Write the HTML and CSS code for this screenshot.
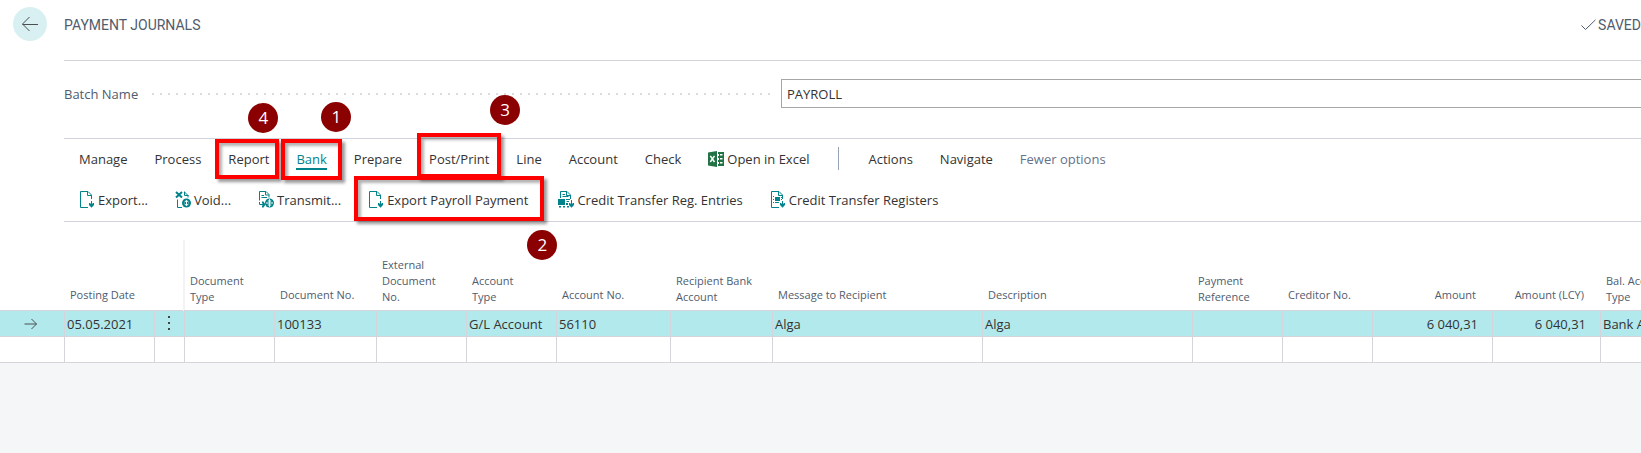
FILE: index.html
```html
<!DOCTYPE html>
<html lang="en">
<head>
<meta charset="utf-8">
<title>Payment Journals</title>
<link rel="stylesheet" href="styles.css">
</head>
<body>
<div class="page">
  <header class="titlebar">
    <button class="back" type="button" aria-label="Back">
      <svg width="18" height="16" viewBox="0 0 18 16"><path d="M8.500 1 1.500 8l7 7M1.500 8.500H17"/></svg>
    </button>
    <div class="title-row">
      <h1 class="title">PAYMENT JOURNALS</h1>
      <span class="saved"><svg width="15" height="12" viewBox="0 0 15 12"><path d="M.5 6.500 4.500 10.500 14.500 .8"/></svg>SAVED</span>
    </div>
  </header>

  <main class="content">
    <div class="field">
      <label class="field-label" for="batch">Batch Name</label>
      <span class="dots"></span>
      <input class="field-input" id="batch" type="text" value="PAYROLL">
    </div>

    <div class="ribbon">
      <nav class="tabs">
        <button class="tab" type="button">Manage</button>
        <button class="tab" type="button">Process</button>
        <button class="tab mark mark-report" type="button">Report<span class="badge">4</span></button>
        <button class="tab tab-active mark mark-bank" type="button">Bank<span class="badge">1</span></button>
        <button class="tab" type="button">Prepare</button>
        <button class="tab mark mark-post" type="button">Post/Print<span class="badge">3</span></button>
        <button class="tab" type="button">Line</button>
        <button class="tab" type="button">Account</button>
        <button class="tab" type="button">Check</button>
        <button class="tab" type="button">
          <svg class="icon" width="16" height="16" viewBox="0 0 16 16"><path fill="#217346" d="M0 1.500 9 0v16L0 14.500zM10 1h6v14h-6z"/><path fill="none" stroke="#fff" stroke-width="1.500" d="m2.300 4.800 4.200 6.200M6.500 4.800 2.300 11"/><path fill="#fff" d="M10 3h1v2h-1zM12 3h2.500v1.500H12zM10 7h1v2h-1zM12 7h2.500v1.500H12zM10 11h1v2h-1zM12 11h2.500v1.500H12z"/></svg>Open in Excel
        </button>
        <span class="separator"></span>
        <button class="tab" type="button">Actions</button>
        <button class="tab" type="button">Navigate</button>
        <button class="tab tab-muted" type="button">Fewer options</button>
      </nav>
      <div class="actions">
        <button class="action" type="button">
          <svg class="icon" width="16" height="17" viewBox="0 0 16 17"><path class="line" d="M9 16.500H1.500V.5H9l3.500 3.500v4M8.500 .5V4.500h4M12.500 10v5"/><path class="solid" d="M10 12h1.500v1h2v-1H15v2l-2.500 2.800L10 14z"/></svg>Export...
        </button>
        <button class="action" type="button">
          <svg class="icon" width="16" height="17" viewBox="0 0 16 17"><path class="line thick" d="m1 1 6 5.500M7 1 1 6.500"/><path class="line" d="M2.500 8.500v8H7M9.500 .5v4h4M9.500 1 13 4.500v2"/><circle class="solid" cx="11.500" cy="12" r="4.500"/><path class="cut" d="M11.500 9.500v5M9.500 11l2-1.500 2 1.500M9.500 13l2 1.500 2-1.500"/></svg>Void...
        </button>
        <button class="action" type="button">
          <svg class="icon" width="16" height="17" viewBox="0 0 16 17"><path class="line" d="M1.500 9.500v-9H8l3 3v3M7.500 .5V4H11M3.500 4.500H6M3.500 6.500H9M1.500 11v2.500H6"/><path class="solid" d="M4 10.500h1.500l2 3-2 3H4v-1.500l1-1.500-1-1.500z"/><circle class="solid" cx="11.500" cy="12" r="4.500"/><path class="cut" d="M11.500 8v8M8 12h7M9.800 10h3.400M9.800 14h3.400"/></svg>Transmit...
        </button>
        <button class="action mark mark-payroll" type="button">
          <svg class="icon" width="16" height="17" viewBox="0 0 16 17"><path class="line" d="M9 16.500H1.500V.5H9l3.500 3.500v4M8.500 .5V4.500h4M12.500 10v5"/><path class="solid" d="M10 12h1.500v1h2v-1H15v2l-2.500 2.800L10 14z"/></svg>Export Payroll Payment<span class="badge">2</span>
        </button>
        <button class="action" type="button">
          <svg class="icon" width="16" height="17" viewBox="0 0 16 17"><path class="line" d="M2.500 7V.5H9L12.500 4v4M8.500 .5v4h4M4.500 3.500H7M4.500 5.500h6M8 8.500h4M8.500 10.500H11M13.500 9v5.500"/><path class="solid" d="M0 8h7v6H0zM1 15h2v1.500H1zM5 15h2v1.500H5zM8 12h2v2H8zM9 15h2v1.500H9zM11 12h1.500v1h2v-1H16v2l-2.500 2.800L11 14z"/></svg>Credit Transfer Reg. Entries
        </button>
        <button class="action" type="button">
          <svg class="icon" width="16" height="17" viewBox="0 0 16 17"><path class="line" d="M9 16.500H1.500V.5H9l3.500 3.500v4M8.500 .5V4.500h4M12.500 10v5"/><path class="solid" d="M5 6h5v4H5zM3 5h1v1H3zM3 8h1v1H3zM3 11h1v1H3zM5 11h4v1H5zM11 6h1v1h-1zM11 8h1v1h-1zM10 12h1.500v1h2v-1H15v2l-2.500 2.800L10 14z"/></svg>Credit Transfer Registers
        </button>
      </div>
    </div>
  </main>

  <div class="grid-scroll">
    <table class="grid">
      <colgroup>
        <col class="w-gutter"><col class="w-s"><col class="w-menu"><col class="w-s"><col class="w-m"><col class="w-s"><col class="w-s"><col class="w-l"><col class="w-m"><col class="w-xl"><col class="w-xl"><col class="w-s"><col class="w-s"><col class="w-amount"><col class="w-lcy"><col class="w-amount">
      </colgroup>
      <thead>
        <tr>
          <th></th>
          <th class="single">Posting Date</th>
          <th></th>
          <th class="frozen">Document<br>Type</th>
          <th class="single">Document No.</th>
          <th>External<br>Document<br>No.</th>
          <th>Account<br>Type</th>
          <th class="single">Account No.</th>
          <th>Recipient Bank<br>Account</th>
          <th class="single">Message to Recipient</th>
          <th class="single">Description</th>
          <th>Payment<br>Reference</th>
          <th class="single">Creditor No.</th>
          <th class="single num">Amount</th>
          <th class="single num">Amount (LCY)</th>
          <th>Bal. Account<br>Type</th>
        </tr>
      </thead>
      <tbody>
        <tr class="selected">
          <td class="gutter"><svg width="14" height="12" viewBox="0 0 14 12"><path d="M.5 6h12M7.500 1l5 5-5 5"/></svg></td>
          <td>05.05.2021</td>
          <td class="menu"><button class="more" type="button" aria-label="More options"><svg width="3" height="15" viewBox="0 0 3 15"><path d="M0 0h2v2H0zM0 6h2v2H0zM0 12h2v2H0z"/></svg></button></td>
          <td></td><td>100133</td><td></td><td>G/L Account</td><td>56110</td><td></td><td>Alga</td><td>Alga</td><td></td><td></td>
          <td class="num">6 040,31</td><td class="num">6 040,31</td><td>Bank Account</td>
        </tr>
        <tr>
          <td class="gutter"></td><td></td><td></td><td></td><td></td><td></td><td></td><td></td><td></td><td></td><td></td><td></td><td></td><td></td><td></td><td></td>
        </tr>
      </tbody>
    </table>
  </div>
</div>
</body>
</html>
```
FILE: styles.css
```css
* {
  box-sizing: border-box;
}

body {
  margin: 0;
  background: #f5f6f8;
  color: #333;
  font: 13px/20px "Open Sans", "Noto Sans", sans-serif;
}

button {
  padding: 0;
  border: 0;
  background: none;
  color: inherit;
  font: inherit;
  cursor: pointer;
}

.page {
  background: #fff;
  overflow: hidden;
}

.titlebar {
  display: flex;
  align-items: flex-start;
  gap: 17px;
  padding: 7px 0 0 13px;
}

.back {
  display: grid;
  place-items: center;
  flex: none;
  width: 34px;
  height: 34px;
  border-radius: 50%;
  background: #d9f0f2;
}

.back svg,
.gutter svg {
  fill: none;
  stroke: #4a4f52;
}

.title-row {
  display: flex;
  flex: 1;
  justify-content: space-between;
  height: 54px;
  padding-top: 8px;
  border-bottom: 1px solid #d4d4d8;
  color: #505c6d;
  font: 400 14px/20px Roboto, sans-serif;
}

.title {
  margin: 0;
  font: inherit;
}

.saved {
  display: flex;
  align-items: center;
  gap: 2px;
  height: 20px;
}

.saved svg {
  fill: none;
  stroke: #505c6d;
}

.content {
  padding-left: 64px;
}

.field {
  display: grid;
  grid-template-columns: auto 1fr minmax(0, 860px);
  align-items: center;
  padding: 18px 0 30px;
}

.field-label {
  padding-right: 14px;
  color: #505c6d;
}

.dots {
  height: 2px;
  margin-right: 8px;
  background: repeating-linear-gradient(90deg, #dcdcdf 0 2px, transparent 2px 8px);
}

.field-input {
  width: 100%;
  height: 29px;
  padding: 0 5px;
  border: 1px solid #a6a6a6;
  border-right: 0;
  background: #fff;
  color: #333;
  font: inherit;
}

.ribbon {
  padding-left: 15px;
  border-top: 1px solid #d0d3da;
  border-bottom: 1px solid #d0d3da;
}

.tabs,
.actions {
  display: flex;
  align-items: center;
  gap: 27px;
  white-space: nowrap;
}

.tabs {
  height: 39px;
}

.actions {
  height: 43px;
}

.tab,
.action {
  position: relative;
  display: flex;
  align-items: center;
  gap: 3px;
  flex: none;
}

.tab-active {
  color: #00838a;
}

.tab-active::before {
  content: "";
  position: absolute;
  inset: auto 0 -1px;
  height: 2px;
  background: #00838a;
}

.tab-muted {
  color: #66728a;
}

.separator {
  width: 1px;
  height: 23px;
  margin: 0 2px;
  background: #98a3b3;
}

.icon {
  flex: none;
}

.line {
  fill: none;
  stroke: #00838a;
}

.thick {
  stroke-width: 2;
}

.solid {
  fill: #00838a;
}

.cut {
  fill: none;
  stroke: #fff;
}

.mark::after {
  content: "";
  position: absolute;
  z-index: 1;
  border: 4px solid #f00;
  box-shadow: 3px 3px 3px rgba(0, 0, 0, .4), inset 3px 3px 3px rgba(0, 0, 0, .3);
}

.mark-report::after { inset: -10px -10px -10px -13px; }
.mark-bank::after { inset: -10px -15px -11px -15px; }
.mark-post::after { inset: -16px -12px -9px -12px; }
.mark-payroll::after { inset: -14px -13px -11px -14px; z-index: 2; }

.badge {
  position: absolute;
  z-index: 3;
  width: 30px;
  height: 30px;
  border-radius: 50%;
  background: #8b0000;
  color: #fff;
  font: 17px/30px "Open Sans", sans-serif;
  text-align: center;
}

.mark-report .badge { left: 20px; top: -46px; }
.mark-bank .badge { left: 25px; top: -47px; }
.mark-post .badge { left: 61px; top: -54px; }
.mark-payroll .badge { right: -26px; top: 40px; }

.grid-scroll {
  padding-top: 18px;
  overflow: hidden;
}

.grid {
  width: 1720px;
  table-layout: fixed;
  border-collapse: separate;
  border-spacing: 0;
}

.w-gutter { width: 64px; }
.w-menu { width: 30px; }
.w-s { width: 90px; }
.w-m { width: 102px; }
.w-l { width: 114px; }
.w-xl { width: 210px; }
.w-amount { width: 120px; }
.w-lcy { width: 108px; }

.grid th {
  height: 71px;
  padding: 0 0 5px 6px;
  border-bottom: 1px solid #d4d4da;
  color: #505c6d;
  font-size: 11px;
  font-weight: 400;
  line-height: 16px;
  text-align: left;
  vertical-align: bottom;
  white-space: nowrap;
}

.grid .single {
  line-height: 20px;
}

.grid .frozen {
  box-shadow: -1px 0 #f3f3f5, inset 1px 0 #f3f3f5;
}

.grid td {
  height: 26px;
  padding: 0 0 0 2px;
  border-bottom: 1px solid #d4d4da;
  border-left: 1px solid #d4d4da;
  white-space: nowrap;
}

.grid th.num {
  padding-right: 16px;
  text-align: right;
}

.grid td.num {
  padding-right: 14px;
  text-align: right;
}

.grid td.gutter {
  padding-left: 24px;
  border-left: 0;
}

.gutter svg,
.more svg {
  display: block;
}

.grid td.menu {
  padding: 0;
}

.more {
  display: block;
  margin: 0 auto;
}

.more svg {
  fill: #444;
}

.selected td {
  background: #b2e9ec;
}
```
